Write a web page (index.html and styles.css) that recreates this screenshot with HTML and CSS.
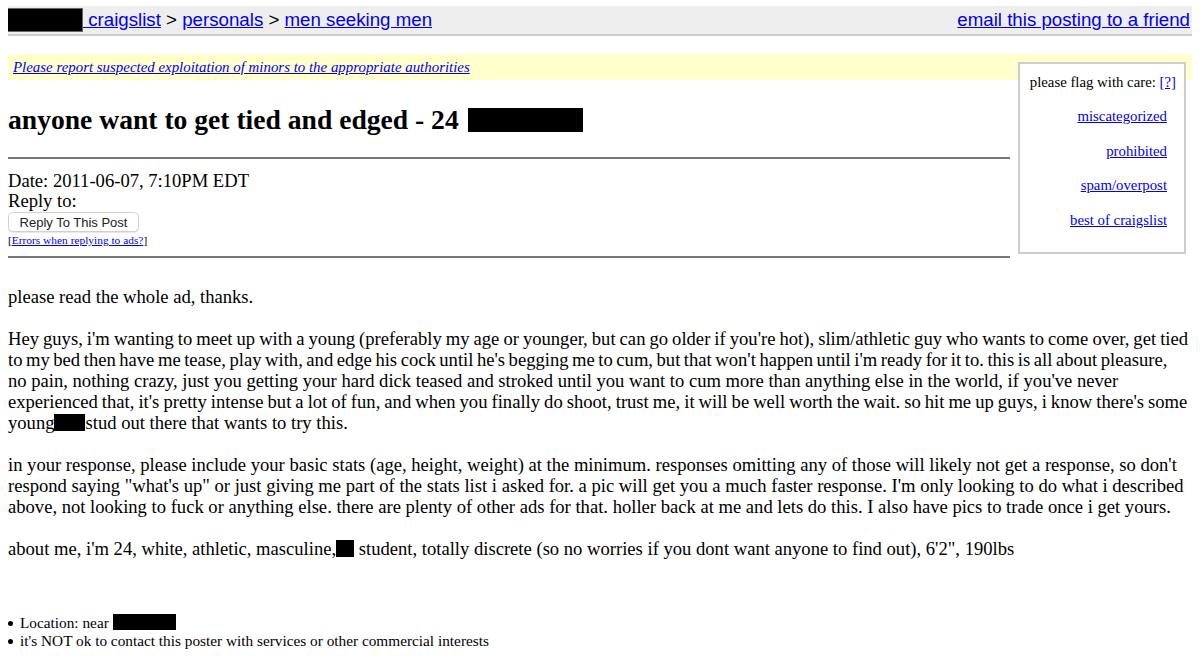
FILE: index.html
```html
<!DOCTYPE html>
<html>
<head>
<meta charset="utf-8">
<title>anyone want to get tied and edged - 24</title>
<link rel="stylesheet" href="styles.css">
</head>
<body>
<div class="bchead">
  <div class="crumbs"><span class="redact redact-head"></span><a href="#">&nbsp;craigslist</a> &gt; <a href="#">personals</a> &gt; <a href="#">men seeking men</a></div>
  <a class="email" href="#">email this posting to a friend</a>
</div>

<div class="warning"><a href="#">Please report suspected exploitation of minors to the appropriate authorities</a></div>

<div class="layout">
  <div class="main">
    <h2 class="title">anyone want to get tied and edged - 24 <span class="redact redact-title"></span></h2>
    <hr class="rule">
    <div class="meta">
      <div>Date: 2011-06-07, 7:10PM EDT</div>
      <div>Reply to:</div>
      <button class="reply">Reply To This Post</button>
      <div class="errors">[<a href="#">Errors when replying to ads?</a>]</div>
    </div>
    <hr class="rule rule-bottom">
  </div>
  <div class="flagbox">
    <div class="flaghead">please flag with care: <a href="#">[?]</a></div>
    <a class="flag" href="#">miscategorized</a>
    <a class="flag" href="#">prohibited</a>
    <a class="flag" href="#">spam/overpost</a>
    <a class="flag" href="#">best of craigslist</a>
  </div>
</div>

<div class="userbody">
  <p>please read the whole ad, thanks.</p>
  <p><span class="tight">Hey guys, i'm wanting to meet up with a young (preferably my age or younger, but can go older if you're hot), slim/athletic guy who wants to come over, get tied</span><br><span class="tighter">to my bed then have me tease, play with, and edge his cock until he's begging me to cum, but that won't happen until i'm ready for it to. this is all about pleasure,</span><br>no pain, nothing crazy, just you getting your hard dick teased and stroked until you want to cum more than anything else in the world, if you've never<br><span class="tight">experienced that, it's pretty intense but a lot of fun, and when you finally do shoot, trust me, it will be well worth the wait. so hit me up guys, i know there's some</span><br>young<span class="redact redact-word"></span>stud out there that wants to try this.</p>
  <p>in your response, please include your basic stats (age, height, weight) at the minimum. responses omitting any of those will likely not get a response, so don't<br>respond saying "what's up" or just giving me part of the stats list i asked for. a pic will get you a much faster response. I'm only looking to do what i described<br>above, not looking to fuck or anything else. there are plenty of other ads for that. holler back at me and lets do this. I also have pics to trade once i get yours.</p>
  <p>about me, i'm 24, white, athletic, masculine,<span class="redact redact-small"></span> student, totally discrete (so no worries if you dont want anyone to find out), 6'2", 190lbs</p>
</div>

<ul class="blurbs">
  <li>Location: near <span class="redact redact-loc"></span></li>
  <li>it's NOT ok to contact this poster with services or other commercial interests</li>
</ul>
</body>
</html>
```

FILE: styles.css
```css
html, body {
  background: #fff;
}
body {
  margin: 6px 8px 0 8px;
  font-family: "Liberation Serif", "Times New Roman", serif;
  font-size: 18.6px;
  color: #000;
}
a {
  color: #0000ee;
}
.redact {
  display: inline-block;
  background: #000;
  vertical-align: middle;
}
.bchead {
  display: flex;
  justify-content: space-between;
  align-items: center;
  height: 28px;
  background: #eeeeee;
  border-bottom: 2px solid #cccccc;
  font-family: "Liberation Sans", Arial, sans-serif;
  font-size: 18.7px;
  padding-right: 2px;
}
.crumbs {
  display: flex;
  align-items: center;
  white-space: pre;
}
.redact-head {
  width: 76px;
  height: 24px;
  margin-left: -1px;
  border: 1px solid #666;
  box-sizing: border-box;
  align-self: flex-start;
}
.warning {
  margin-top: 18px;
  height: 26px;
  background: #ffffcc;
  font-size: 14.9px;
  font-style: italic;
  padding-left: 5px;
  line-height: 26px;
}
.layout {
  display: flex;
  align-items: flex-start;
}
.main {
  width: 1002px;
}
.title {
  margin: 24px 0 0 0;
  font-size: 27.6px;
  font-weight: bold;
  line-height: 32px;
}
.redact-title {
  width: 115px;
  height: 24px;
  vertical-align: -3px;
  margin-left: 2px;
}
.rule {
  margin: 21px 0 0 0;
  border: 0;
  border-top: 2px solid #777;
  height: 0;
}
.rule-bottom {
  margin-top: 8px;
}
.meta {
  margin-top: 12px;
  line-height: 20px;
}
.reply {
  display: block;
  margin: 1px 0 0 0;
  font-family: "Liberation Sans", Arial, sans-serif;
  font-size: 13px;
  padding: 1px 9px;
  height: 20px;
  width: 131px;
  background: #fff;
  border: 1px solid #d0d0d0;
  border-radius: 5px;
  box-shadow: 0 1px 1px rgba(0,0,0,0.1);
  color: #222;
}
.errors {
  font-size: 11.4px;
  line-height: 16px;
  margin-top: 0;
}
.flagbox {
  margin: -18px 6px 0 8px;
  width: 168px;
  height: 192px;
  box-sizing: border-box;
  border: 2px solid #cccccc;
  background: #fff;
  font-size: 14.8px;
  text-align: right;
  padding: 9px 8px 0 4px;
  display: flex;
  flex-direction: column;
  align-items: flex-end;
  white-space: nowrap;
}
.flaghead {
  line-height: 18px;
}
.flag {
  margin-top: 17px;
  margin-right: 9px;
  line-height: 17.5px;
}
.userbody {
  margin-top: 28px;
  line-height: 21px;
  white-space: nowrap;
}
.userbody p {
  margin: 0 0 21px 0;
}
.tight {
  word-spacing: -0.6px;
}
.tighter {
  word-spacing: -1.1px;
}
.redact-word {
  width: 31px;
  height: 17px;
  vertical-align: -2px;
}
.redact-small {
  width: 18px;
  height: 17px;
  vertical-align: -2px;
}
.blurbs {
  margin: 55px 0 0 0;
  padding: 0;
  list-style: none;
  font-size: 15.3px;
  line-height: 18px;
}
.blurbs li {
  position: relative;
  padding-left: 12px;
}
.blurbs li::before {
  content: "";
  position: absolute;
  left: 0;
  top: 7px;
  width: 5px;
  height: 5px;
  border-radius: 50%;
  background: #000;
}
.redact-loc {
  width: 63px;
  height: 16px;
  vertical-align: -2px;
}
```
